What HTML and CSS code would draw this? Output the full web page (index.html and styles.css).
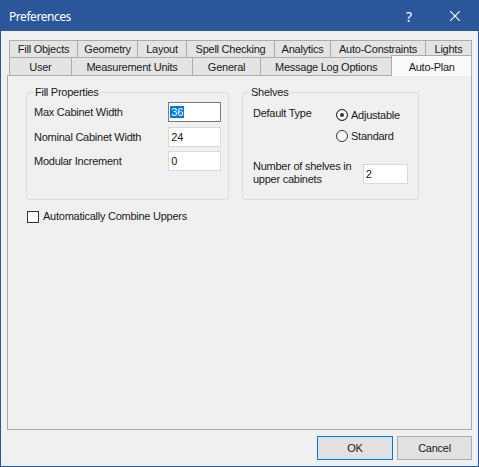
FILE: index.html
```html
<!DOCTYPE html>
<html>
<head>
<meta charset="utf-8">
<link rel="stylesheet" href="styles.css">
</head>
<body>
<div class="window">
  <div class="titlebar">
    <span class="title">Preferences</span>
    <div class="caption-btn help">?</div>
    <div class="caption-btn close">
      <svg width="10" height="10" viewBox="0 0 10 10"><path d="M0 0L10 10M10 0L0 10" stroke="#fff" stroke-width="1.1" fill="none"/></svg>
    </div>
  </div>
  <div class="client">
    <div class="tabrow row1">
      <div class="tab t-fill">Fill Objects</div>
      <div class="tab t-geo">Geometry</div>
      <div class="tab t-layout">Layout</div>
      <div class="tab t-spell">Spell Checking</div>
      <div class="tab t-analytics">Analytics</div>
      <div class="tab t-constraints">Auto-Constraints</div>
      <div class="tab t-lights">Lights</div>
    </div>
    <div class="tabrow row2">
      <div class="tab t-user">User</div>
      <div class="tab t-units">Measurement Units</div>
      <div class="tab t-general">General</div>
      <div class="tab t-log">Message Log Options</div>
      <div class="tab t-plan active">Auto-Plan</div>
    </div>
    <div class="tabpage">
      <div class="groups">
        <fieldset class="group fill">
          <legend>Fill Properties</legend>
          <div class="field">
            <span class="lbl">Max Cabinet Width</span>
            <div class="textbox focused"><span class="sel">36</span></div>
          </div>
          <div class="field">
            <span class="lbl">Nominal Cabinet Width</span>
            <div class="textbox">24</div>
          </div>
          <div class="field">
            <span class="lbl">Modular Increment</span>
            <div class="textbox">0</div>
          </div>
        </fieldset>
        <fieldset class="group shelves">
          <legend>Shelves</legend>
          <div class="deftype">
            <span class="lbl2">Default Type</span>
            <div class="radios">
              <div class="radio"><span class="circle checked"></span>Adjustable</div>
              <div class="radio"><span class="circle"></span>Standard</div>
            </div>
          </div>
          <div class="count">
            <span class="lbl3">Number of shelves in<br>upper cabinets</span>
            <div class="textbox small">2</div>
          </div>
        </fieldset>
      </div>
      <div class="check"><span class="box"></span>Automatically Combine Uppers</div>
    </div>
    <div class="footer">
      <button class="btn default">OK</button>
      <button class="btn cancel">Cancel</button>
    </div>
  </div>
</div>
</body>
</html>
```
FILE: styles.css
```css
* { box-sizing: border-box; }
html, body { margin: 0; padding: 0; background: #f0f0f0; }
body {
  font-family: "Liberation Sans", Arial, sans-serif;
  font-size: 11px;
  letter-spacing: -0.25px;
  color: #1a1a1a;
}
.window {
  width: 479px;
  height: 467px;
  border: 1px solid #2b579a;
  background: #f0f0f0;
  display: flex;
  flex-direction: column;
}
.titlebar {
  flex: none;
  height: 30px;
  background: #2b579a;
  color: #fff;
  display: flex;
  align-items: center;
}
.title {
  flex: 1;
  padding-left: 8px;
  font-family: "Noto Sans", "Open Sans", sans-serif;
  font-size: 12px;
  letter-spacing: -0.45px;
}
.caption-btn {
  width: 46px;
  height: 30px;
  display: flex;
  align-items: center;
  justify-content: center;
}
.help {
  font-family: "Noto Sans", sans-serif;
  font-size: 14px;
  letter-spacing: 0;
  padding-top: 1px;
}
.client {
  flex: 1;
  display: flex;
  flex-direction: column;
  padding: 9px 6px 6px 6px;
}
.tabrow {
  flex: none;
  display: flex;
  padding-left: 2px;
}
.row2 {
  margin-top: -1px;
  position: relative;
  z-index: 1;
}
.tab {
  border: 1px solid #acacac;
  background: #e4e4e4;
  display: flex;
  align-items: center;
  justify-content: center;
  white-space: nowrap;
  margin-left: -1px;
}
.tab:first-child { margin-left: 0; }
.row1 .tab { height: 18px; }
.row2 .tab { height: 19px; }
.row2 .tab.active {
  height: 21px;
  margin-top: -2px;
  border-bottom: none;
  background: #f9f9f9;
  padding-top: 2px;
}
.t-fill { width: 69px; }
.t-geo { width: 61px; }
.t-layout { width: 50px; }
.t-spell { width: 89px; }
.t-analytics { width: 57px; }
.t-constraints { width: 96px; }
.t-lights { width: 47px; }
.t-user { width: 63px; }
.t-units { width: 123px; }
.t-general { width: 69px; }
.t-log { width: 133px; }
.t-plan { width: 81px; }

.tabpage {
  flex: 1;
  margin-top: -1px;
  border: 1px solid #acacac;
  background: #f0f0f0;
  padding: 10px 18px 0 18px;
}
.groups {
  display: flex;
  gap: 13px;
}
.group {
  margin: 0;
  border: 1px solid #dcdcdc;
  border-radius: 3px;
  height: 114px;
  min-width: 0;
}
.group legend {
  padding: 0 1px;
  line-height: 13px;
}
.fill {
  width: 203px;
  padding: 3px 7px 0 7px;
}
.shelves {
  width: 177px;
  padding: 5px 10px 0 10px;
}
.shelves legend { margin-left: -3px; }
.field {
  display: flex;
  align-items: center;
  height: 20px;
}
.field + .field { margin-top: 4.5px; }
.lbl { width: 135px; }
.textbox {
  width: 53px;
  height: 20px;
  border: 1px solid #d9d9d9;
  background: #fff;
  padding-left: 2px;
  display: flex;
  align-items: center;
}
.textbox.focused { border-color: #7a7a7a; }
.sel {
  background: #0078d7;
  color: #fff;
  line-height: 12px;
  margin-left: -1px;
  padding: 0 1px;
}
.deftype {
  display: flex;
  align-items: flex-start;
}
.lbl2 {
  width: 83px;
  line-height: 18px;
}
.radio {
  height: 21px;
  display: flex;
  align-items: center;
  gap: 3px;
}
.circle {
  width: 12px;
  height: 12px;
  border: 1px solid #333;
  border-radius: 50%;
  background: #fff;
}
.circle.checked {
  background: #333;
  box-shadow: inset 0 0 0 3px #fff;
}
.count {
  display: flex;
  align-items: flex-start;
  margin-top: 14px;
}
.lbl3 {
  width: 112px;
  line-height: 12.5px;
}
.textbox.small {
  width: 46px;
  margin-top: 4px;
}
.check {
  display: flex;
  align-items: center;
  gap: 4px;
  margin-top: 10px;
  margin-left: 1px;
  line-height: 13px;
}
.check .box {
  width: 12px;
  height: 12px;
  border: 1px solid #333;
  background: #fff;
}
.footer {
  flex: none;
  display: flex;
  justify-content: flex-end;
  gap: 4px;
  margin-top: 6px;
}
.btn {
  height: 24px;
  padding: 0;
  margin: 0;
  font-family: inherit;
  font-size: 11px;
  letter-spacing: -0.25px;
  color: #1a1a1a;
  background: #e1e1e1;
  border: 1px solid #adadad;
}
.btn.default {
  width: 76px;
  border-color: #0078d7;
}
.btn.cancel { width: 75px; }
```
